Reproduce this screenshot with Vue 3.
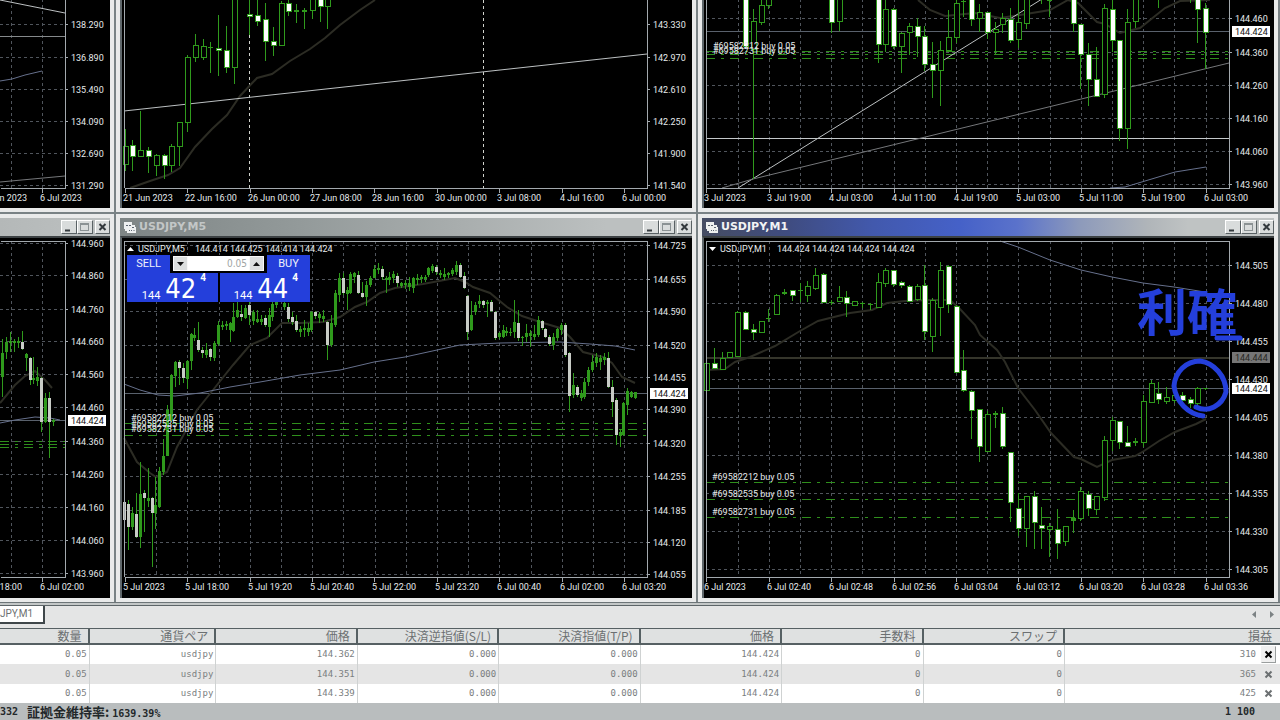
<script setup>
import { ref } from 'vue'

const lot = ref('0.05')

// Candle rows: [slot, high, low, bodyTop, bodyBottom, kind]
// Vertical values are in thirds of a pixel below the chart's base line.
// kind: 0 rising, 1 falling, 2 flat
const step = 7.8
const vlines = (x0, n) => Array.from({ length: n }, (_, i) => Math.round(x0 + 31.2 * (i + 1)))
const ys = (list, y) => list.map((t, i) => ({ t, y: y[i] }))
const dates = (list, x0) => list.map((t, i) => ({ t, x: Math.round(x0 + 62.4 * i) }))

const h1 = [
  [0,388,513,437,492,0],[1,420,513,436,467,1],[2,332,470,450,467,0],[3,441,518,451,469,1],[4,463,527,464,496,0],
  [5,463,538,465,496,1],[6,432,515,438,496,0],[7,365,497,367,439,0],[8,166,396,170,367,0],[9,101,185,134,171,0],
  [10,117,180,139,170,0],[11,125,218,140,144,2],[12,45,227,143,151,1],[13,78,220,149,201,1],[14,-9,252,-9,200,0],
  [16,-9,105,41,48,1],[17,-9,77,44,64,1],[18,10,183,58,124,1],[19,82,167,124,135,1],[20,3,137,9,136,0],
  [21,0,47,8,32,1],[22,12,70,31,35,2],[23,25,88,31,35,2],[24,-9,58,-9,30,0],[25,-9,66,-9,19,1],[26,-9,87,-9,19,0]
]
const m30 = [
  [5,-9,140,-9,138,1],[6,28,538,62,148,0],[7,-9,75,14,66,0],[8,-9,28,-9,15,0],[16,-9,100,-9,65,1],[17,-9,93,-9,62,0],
  [22,-9,188,-9,131,1],[23,-9,155,26,133,0],[24,24,147,26,138,1],[25,95,220,98,138,0],[26,70,165,78,97,0],
  [27,55,170,77,108,1],[28,77,213,109,193,1],[29,127,293,191,211,1],[30,123,317,150,211,0],[31,30,150,112,150,0],
  [32,0,130,8,112,0],[33,-9,52,2,6,2],[34,-9,77,-9,56,1],[35,13,95,37,55,0],[36,36,118,37,95,1],[37,65,165,86,95,0],
  [38,40,100,55,73,0],[39,23,130,57,119,1],[40,-9,145,65,118,0],[41,-9,88,-9,68,0],[43,-9,13,-9,-6,2],[44,-9,50,0,3,2],
  [47,-9,97,-9,70,1],[48,72,268,73,163,1],[49,128,317,162,238,1],[50,140,290,238,288,1],[51,13,293,25,283,0],
  [52,0,155,26,121,1],[53,120,422,121,383,1],[54,27,447,65,385,0],[55,-9,83,-9,62,0],[58,-9,23,-9,-6,2],
  [62,-9,8,-9,-6,2],[63,-9,130,-9,27,1],[64,10,208,23,95,1]
]
const m1 = [
  [0,445,525,445,525,0],[1,400,463,443,460,1],[2,410,463,428,462,0],[3,411,425,411,425,0],[4,288,424,290,422,0],
  [5,287,344,290,343,1],[6,328,375,341,351,1],[7,318,351,319,350,0],[8,283,322,308,312,2],[9,238,299,240,298,0],
  [10,223,240,232,238,2],[11,225,257,226,240,1],[12,205,260,225,229,2],[13,198,262,213,240,0],[14,160,226,180,218,0],
  [15,174,264,176,260,1],[16,256,270,260,265,2],[17,213,260,247,258,0],[18,228,305,247,265,1],[19,257,273,258,270,0],
  [20,262,280,264,268,2],[21,264,285,266,270,2],[22,173,276,200,275,0],[23,160,215,166,204,0],[24,164,215,166,207,1],
  [25,198,218,201,210,1],[26,210,258,214,257,1],[27,208,258,213,251,0],[28,150,375,209,347,1],[29,248,410,256,363,0],
  [30,140,362,165,275,0],[31,150,293,153,268,1],[32,270,474,273,470,1],[33,405,530,464,525,1],[34,525,673,527,585,1],
  [35,583,740,583,692,1],[36,588,708,598,707,0],[37,588,640,595,601,2],[38,576,702,593,692,1],[39,711,920,712,862,1],
  [40,835,963,878,940,1],[41,843,995,844,940,0],[42,828,1003,844,920,1],[43,877,1002,930,939,1],[44,925,1027,934,943,0],
  [45,883,1032,943,983,1],[46,933,992,934,977,0],[47,885,953,910,918,2],[48,817,918,829,910,0],[49,829,903,836,878,1],
  [50,843,899,844,881,0],[51,663,858,674,845,0],[52,605,707,615,675,0],[53,617,703,619,680,1],[54,632,695,680,692,1],
  [55,670,693,679,684,2],[56,540,697,558,681,0],[57,495,561,503,560,0],[58,500,568,535,552,1],[59,515,567,545,558,0],
  [60,538,565,540,556,0],[61,530,561,540,555,1],[62,547,580,552,565,1],[63,517,570,519,565,0],[64,518,524,519,523,2]
]
const m5 = [
  [0,855,972,860,915,1],[1,855,1005,868,937,1],[2,875,945,895,937,0],[3,835,970,897,965,1],[4,740,1000,837,965,0],
  [5,825,950,835,850,1],[6,760,875,850,857,0],[7,847,1057,850,893,1],[8,785,942,870,893,0],[9,757,878,768,875,0],
  [10,673,780,722,770,0],[11,570,724,585,722,0],[12,478,620,480,615,0],[13,437,515,442,482,0],[14,435,510,442,460,1],
  [15,445,505,460,490,1],[16,435,522,437,492,0],[17,355,465,358,437,0],[18,338,378,360,370,0],[19,322,412,375,405,1],
  [20,395,430,405,415,1],[21,385,428,405,420,0],[22,400,437,402,427,1],[23,378,437,385,430,0],[24,317,392,330,388,0],
  [25,318,345,330,335,0],[26,318,345,328,334,0],[27,320,380,324,345,0],[28,265,350,305,347,0],[29,262,310,285,305,0],
  [30,270,318,297,305,1],[31,270,312,280,310,0],[32,240,330,270,300,1],[33,285,330,290,318,0],[34,285,325,312,320,0],
  [35,300,330,313,320,0],[36,300,335,310,330,1],[37,280,365,300,335,0],[38,262,318,268,305,0],[39,250,280,255,270,0],
  [41,250,285,265,275,0],[42,263,320,275,312,1],[43,290,330,305,320,1],[44,300,350,318,345,1],[45,332,365,342,350,0],
  [46,315,365,340,346,0],[47,325,362,340,350,0],[48,288,350,290,345,0],[49,288,312,292,304,1],[50,290,325,298,308,0],
  [51,285,320,304,312,0],[52,318,435,320,390,1],[53,300,395,325,390,0],[54,225,335,235,330,0],[55,175,262,190,240,0],
  [56,175,240,190,235,1],[57,215,285,225,238,0],[58,170,237,178,235,0],[59,170,205,175,185,0],[60,168,238,180,235,1],
  [61,200,250,233,245,1],[62,198,272,210,245,0],[63,183,215,188,210,0],[64,150,190,162,188,0],[65,143,178,158,165,0],
  [66,152,195,162,185,1],[67,183,235,188,195,0],[68,170,210,185,195,0],[69,168,205,178,190,0],[70,175,215,182,205,1],
  [71,200,220,205,212,0],[72,195,222,205,211,0],[73,185,228,203,215,0],[74,185,233,188,218,0],[75,178,210,188,195,0],
  [76,180,205,187,193,0],[77,180,200,187,193,0],[78,155,185,160,180,0],[79,148,175,152,168,0],[80,150,180,155,172,1],
  [81,165,190,174,180,0],[82,160,195,178,185,0],[83,170,190,175,181,0],[84,160,183,165,178,0],[85,138,180,150,172,0],
  [86,145,190,150,185,1],[87,170,222,183,220,1],[88,240,374,242,352,1],[89,258,348,300,345,0],[90,262,300,270,290,0],
  [91,240,280,258,266,0],[92,255,280,258,270,1],[93,255,305,260,268,0],[94,255,290,260,288,1],[95,288,375,290,368,1],
  [96,350,372,355,366,0],[97,330,370,345,365,0],[98,335,362,347,355,0],[99,340,362,350,355,0],[100,255,370,320,350,0],
  [101,285,378,325,370,1],[102,362,392,365,370,0],[103,328,380,355,365,0],[104,345,395,355,362,0],[105,330,375,358,365,0],
  [106,303,365,315,360,0],[107,315,345,318,340,1],[108,338,370,343,365,1],[109,360,392,365,388,1],[110,355,405,365,390,0],
  [111,340,378,343,370,0],[112,323,360,330,345,0],[113,325,425,330,420,1],[114,410,590,415,542,1],[115,475,548,510,540,0],
  [116,510,545,515,540,1],[117,525,557,535,548,0],[118,490,552,500,545,0],[119,455,512,465,500,0],[120,420,470,440,465,0],
  [121,415,455,425,445,0],[122,420,465,430,440,0],[123,415,450,425,435,0],[124,410,520,430,515,1],[125,495,605,515,560,1],
  [126,550,690,555,660,1],[127,645,697,650,663,0],[128,560,664,565,660,0],[129,520,600,527,570,0],[130,528,550,532,545,0],
  [131,530,552,532,548,0]
]
const m15 = [
  [-1,440,490,450,482,0],[0,372,545,415,485,0],[1,365,432,380,410,0],[2,350,412,378,385,0],[3,372,412,379,385,0],
  [4,365,400,378,385,0],[5,348,405,380,402,1],[6,415,468,417,428,0],[7,427,510,428,495,1],[8,427,507,489,495,0],
  [9,457,512,485,497,0],[10,485,650,490,620,1],[11,535,625,548,620,0],[12,530,728,548,620,1],[13,612,632,616,622,0]
]

const wave = ['144.960','144.860','144.760','144.660','144.560','144.460','144.360','144.260','144.160','144.060','143.960']

const windows = [
  {
    id: 'daily', cls: 'edge', box: [0, 0, 110, 208], plot: [0, -1, 65, 188],
    vx: [11, 42], prices: ys(['138.290','136.890','135.490','134.090','132.690','131.290'], [24, 57, 89, 121, 153, 185]),
    dates: [{ t: 'n 2023', x: 27, end: true, tick: -20 }, { t: '6 Jul 2023', x: 42 }],
    levels: [{ y: 36, c: 'rule' }],
    curves: [
      { c: 'bright', p: '0,0 65,13' }, { c: 'ma-slow', p: '0,81 12,79 25,75 42,71' }, { c: 'mid', p: '0,182 65,176' }
    ]
  },
  {
    id: 'h4', cls: 'inner', box: [122, 0, 570, 208], plot: [124, -1, 647, 188], vx: [],
    prices: ys(['143.330','142.970','142.610','142.250','141.900','141.540'], [24, 57, 89, 121, 153, 185]), noGrid: true,
    dates: dates(['21 Jun 2023','22 Jun 16:00','26 Jun 00:00','27 Jun 08:00','28 Jun 16:00','30 Jun 00:00','3 Jul 08:00','4 Jul 16:00','6 Jul 00:00'], 124.7),
    marks: [{ x: 249, y: 35 }, { x: 483, y: 0 }],
    curves: [
      { c: 'ma-fast', p: '130,188 150,181 168,175 180,168 195,147 212,129 227,115 240,96 257,78 272,74 290,61 310,49 325,38 340,25 360,10 375,0' },
      { c: 'bright', p: '124,111 647,54' }
    ],
    candles: h1, x0: 125, step, base: 0, w: 5
  },
  {
    id: 'm30', cls: 'inner', box: [704, 0, 570, 208], plot: [706, -1, 1229, 188], vx: vlines(706.4, 16),
    prices: ys(['144.460','144.360','144.260','144.160','144.060','143.960'], [18, 52, 85, 118, 151, 184]),
    dates: dates(['3 Jul 2023','3 Jul 19:00','4 Jul 03:00','4 Jul 11:00','4 Jul 19:00','5 Jul 03:00','5 Jul 11:00','5 Jul 19:00','6 Jul 03:00'], 706.4),
    levels: [{ y: 31, c: 'bid' }, { y: 138, c: 'solid' }], orders: [51, 54, 58],
    notes: [{ t: '#69582212 buy 0.05', x: 713, y: 49 }, { t: '#69582731 buy 0.05', x: 713, y: 54 }],
    tags: [{ t: '144.424', y: 31, c: 'now' }],
    curves: [
      { c: 'ma-fast', p: '918,0 930,10 945,16 975,13 1000,18 1020,15 1050,10 1068,0 1078,3 1097,22 1105,24 1120,33 1140,28 1165,8 1180,1 1210,0' },
      { c: 'bright', p: '738,188 1042,-1' }, { c: 'mid', p: '722,188 753,179 1229,63' },
      { c: 'ma-slow', p: '1110,188 1125,187 1145,181 1175,172 1206,167' }
    ],
    candles: m30, x0: 706.4, step, base: 0, w: 5
  },
  {
    id: 'm15', cls: 'edge', bar: 'idle', title: '', box: [0, 238, 110, 360], plot: [0, 241, 65, 577],
    vx: [11, 42], prices: ys(wave, [243, 275, 309, 341, 374, 407, 441, 474, 507, 540, 573]),
    dates: [{ t: '18:00', x: 22, end: true, tick: -20 }, { t: '6 Jul 02:00', x: 42 }],
    levels: [{ y: 420, c: 'bid' }], orders: [441, 444, 447], tags: [{ t: '144.424', y: 420, c: 'now' }],
    curves: [
      { c: 'ma-fast', p: '0,403 15,385 25,376 35,371 45,380 52,388' },
      { c: 'ma-slow', p: '0,423 15,420 35,417 50,418 60,420' }
    ],
    candles: m15, x0: 2.7, step: 3.9, base: 215, w: 3
  },
  {
    id: 'm5', cls: 'inner', bar: 'idle', title: 'USDJPY,M5', box: [122, 238, 570, 360], plot: [124, 241, 647, 577],
    vx: vlines(124.9, 16),
    prices: ys(['144.725','144.655','144.590','144.520','144.455','144.390','144.320','144.255','144.185','144.120','144.055'], [245, 279, 311, 345, 377, 409, 443, 476, 510, 542, 574]),
    dates: dates(['5 Jul 2023','5 Jul 18:00','5 Jul 19:20','5 Jul 20:40','5 Jul 22:00','5 Jul 23:20','6 Jul 00:40','6 Jul 02:00','6 Jul 03:20'], 124.7),
    levels: [{ y: 393, c: 'bid' }], orders: [423, 429, 435], tags: [{ t: '144.424', y: 393, c: 'now' }],
    notes: [{ t: '#69582212 buy 0.05', x: 131, y: 421 }, { t: '#69582535 buy 0.05', x: 131, y: 427 }, { t: '#69582731 buy 0.05', x: 131, y: 432 }],
    head: { t: 'USDJPY,M5', v: '144.414 144.425 144.414 144.424', arrow: '127,251 134,251 130.5,247' },
    trade: true,
    curves: [
      { c: 'ma-fast', p: '124,438 137,462 150,473 156,477 167,472 177,447 197,410 213,390 233,365 250,345 267,338 282,323 300,323 323,322 340,317 355,307 367,302 380,293 395,288 423,284 455,278 465,282 473,287 490,293 507,307 522,316 540,322 560,328 570,337 583,352 603,357 612,363 622,377 635,383' },
      { c: 'ma-slow', p: '124,384 140,390 158,395 175,396 200,393 230,387 260,382 300,375 340,370 374,362 405,357 437,350 460,345 500,343 560,342 590,344 615,346 635,350' }
    ],
    candles: m5, x0: 124.7, step: 3.9, base: 215, w: 3
  },
  {
    id: 'm1', cls: 'inner', bar: 'live', title: 'USDJPY,M1', box: [704, 238, 570, 360], plot: [706, 241, 1229, 577],
    vx: vlines(706.4, 16),
    prices: ys(['144.505','144.480','144.455','144.430','144.405','144.380','144.355','144.330','144.305'], [265, 303, 341, 379, 417, 455, 493, 531, 569]),
    dates: dates(['6 Jul 2023','6 Jul 02:40','6 Jul 02:48','6 Jul 02:56','6 Jul 03:04','6 Jul 03:12','6 Jul 03:20','6 Jul 03:28','6 Jul 03:36'], 706.4),
    levels: [{ y: 357, c: 'ask' }, { y: 388, c: 'bid' }], orders: [482, 499, 517],
    tags: [{ t: '144.444', y: 357, c: 'old' }, { t: '144.424', y: 388, c: 'now' }],
    notes: [{ t: '#69582212 buy 0.05', x: 712, y: 480 }, { t: '#69582535 buy 0.05', x: 712, y: 497 }, { t: '#69582731 buy 0.05', x: 712, y: 515 }],
    head: { t: 'USDJPY,M1', v: '144.424 144.424 144.424 144.424', arrow: '709,247 716,247 712.5,251' },
    sketch: true,
    curves: [
      { c: 'ma-fast', p: '706,370 725,369 735,362 750,357 775,346 800,331 818,321 850,313 872,310 887,303 905,301 930,300 950,300 960,309 975,325 980,335 997,350 1005,362 1018,388 1035,410 1051,433 1074,457 1081,459 1097,467 1112,460 1135,456 1144,451 1159,441 1175,432 1196,424 1206,419' },
      { c: 'ma-slow', p: '1000,241 1018,247 1050,260 1081,270 1112,277 1143,283 1174,287 1205,292' }
    ],
    candles: m1, x0: 706.4, step, base: 215, w: 5
  }
]

function wicks(w) {
  return (w.candles || []).map(c => {
    const x = Math.round(w.x0 + c[0] * w.step - 0.5) + 0.5
    return `M${x} ${w.base + c[1] / 3}V${w.base + c[2] / 3}`
  }).join('')
}
function bodies(w) {
  return (w.candles || []).map(c => {
    const cx = Math.round(w.x0 + c[0] * w.step - 0.5) + 0.5
    const y = Math.round(w.base + c[3] / 3)
    const h = Math.max(1, Math.round(w.base + c[4] / 3) - y)
    const flat = c[5] === 2
    const name = w.w === 3 ? (c[5] === 1 ? 'dense-down' : 'dense-up') : flat ? 'flat' : c[5] === 1 ? 'down' : 'up'
    return { x: cx - w.w / 2, y: w.w === 3 || flat ? y : y + 0.5, w: w.w, h, name }
  })
}

const columns = ['数量', '通貨ペア', '価格', '決済逆指値(S/L)', '決済指値(T/P)', '価格', '手数料', 'スワップ', '損益']
const positions = [
  ['0.05', 'usdjpy', '144.362', '0.000', '0.000', '144.424', '0', '0', '310'],
  ['0.05', 'usdjpy', '144.351', '0.000', '0.000', '144.424', '0', '0', '365'],
  ['0.05', 'usdjpy', '144.339', '0.000', '0.000', '144.424', '0', '0', '425']
]
</script>

<template>
  <main class="terminal">
    <section class="desk">
      <article v-for="w in windows" :key="w.id" class="win" :class="w.cls">
        <header v-if="w.bar" class="bar" :class="w.bar">
          <template v-if="w.title">
            <svg class="logo" viewBox="0 0 14 13" aria-hidden="true">
              <path d="M1 1h8v3h3v2h1v6H4v-2H2V8H1z" fill="#eef0f0" />
              <path d="M3 4.500h2M6 4.500h2M6 9.500h1M8 9.500h1M11 9v1M9 6.500h2" stroke="#5b6470" fill="none" />
            </svg>
            <h2>{{ w.title }}</h2>
          </template>
          <div class="tools">
            <button type="button" aria-label="Minimize"><svg viewBox="0 0 11 10"><path d="M2 8.500h5" /></svg></button>
            <button type="button" aria-label="Maximize"><svg viewBox="0 0 11 10"><path class="pale" d="M1.500 1v8M9.500 1v8M1 8.500h9M1 1.500h9M1 2.500h9" /></svg></button>
            <button type="button" aria-label="Close" class="shut"><svg viewBox="0 0 11 10"><path class="cross" d="M2.500 2l6 6M8.500 2l-6 6" /></svg></button>
          </div>
        </header>
        <div class="chart">
          <svg class="plot" :viewBox="w.box.join(' ')">
            <g class="grid">
              <path v-for="x in w.vx" :key="x" :d="`M${x + 0.5} ${w.plot[1]}V${w.plot[3]}`" />
              <template v-if="!w.noGrid">
                <path v-for="p in w.prices" :key="p.y" :d="`M${w.plot[0]} ${p.y + 0.5}H${w.plot[2]}`" />
              </template>
            </g>
            <path v-for="m in w.marks" :key="m.x" class="period" :d="`M${m.x + 0.5} ${m.y}V${w.plot[3]}`" />
            <path v-for="l in w.levels" :key="l.y" :class="l.c" :d="`M${w.plot[0]} ${l.y + 0.5}H${w.plot[2]}`" />
            <path v-for="y in w.orders" :key="y" class="order" :d="`M${w.plot[0]} ${y + 0.5}H${w.plot[2]}`" />
            <polyline v-for="c in w.curves" :key="c.p" :class="c.c" :points="c.p" />
            <path class="wick" :d="wicks(w)" />
            <rect v-for="(b, i) in bodies(w)" :key="i" :class="b.name" :x="b.x" :y="b.y" :width="b.w" :height="b.h" />
            <path class="axis" :d="`M${w.plot[0] + 0.5} ${w.plot[1] + 0.5}H${w.plot[2] + 0.5}V${w.plot[3] + 0.5}H${w.plot[0] + 0.5}`" />
            <path v-if="w.cls === 'inner'" class="axis" :d="`M${w.plot[0] + 0.5} ${w.plot[1]}V${w.plot[3]}`" />
            <g class="axis">
              <path v-for="p in w.prices" :key="p.y" :d="`M${w.plot[2]} ${p.y + 0.5}h3`" />
              <path v-for="d in w.dates" :key="d.t" :d="`M${(d.tick || d.x) + 0.5} ${w.plot[3]}v5`" />
            </g>
            <text v-for="p in w.prices" :key="p.t" :x="w.plot[2] + 6" :y="p.y + 4">{{ p.t }}</text>
            <text v-for="d in w.dates" :key="d.t" :x="d.end ? d.x : d.x - 2" :y="w.plot[3] + 13" :text-anchor="d.end ? 'end' : 'start'">{{ d.t }}</text>
            <text v-for="n in w.notes" :key="n.t" :x="n.x" :y="n.y">{{ n.t }}</text>
            <g v-for="t in w.tags" :key="t.t" :class="t.c">
              <rect :x="w.plot[2] + 3" :y="t.y - 5" width="38" height="11" />
              <text :x="w.plot[2] + 6" :y="t.y + 4">{{ t.t }}</text>
            </g>
            <template v-if="w.head">
              <polygon class="arrow" :points="w.head.arrow" />
              <text :x="w.plot[0] + 14" :y="252">{{ w.head.t }}</text>
              <text :x="w.plot[0] + 71" :y="252">{{ w.head.v }}</text>
            </template>
            <g v-if="w.sketch" class="pen">
              <text class="memo" x="1137" y="331">利確</text>
              <path d="M1217 338H1240" />
              <path d="M1196 407C1208 413 1222 406 1226 392C1226 376 1214 363 1200 361C1186 361 1175 372 1174 386C1176 402 1188 414 1203 416" />
            </g>
          </svg>
          <form v-if="w.trade" class="trade" @submit.prevent>
            <button type="button" class="side sell">SELL</button>
            <div class="lot">
              <button type="button" aria-label="Decrease"><svg viewBox="0 0 7 4"><path d="M0 0h7L3.500 4z" /></svg></button>
              <input v-model="lot" type="text" aria-label="Volume" />
              <button type="button" aria-label="Increase"><svg viewBox="0 0 7 4"><path d="M0 4h7L3.500 0z" /></svg></button>
            </div>
            <button type="button" class="side buy">BUY</button>
            <button type="button" class="quote bid-box"><small>144</small><b>42</b><sup>4</sup></button>
            <button type="button" class="quote ask-box"><small>144</small><b>44</b><sup>4</sup></button>
          </form>
        </div>
      </article>
    </section>

    <nav class="tabs">
      <a href="#m1">JPY,M1</a>
      <div class="scroll">
        <button type="button" aria-label="Scroll left"><svg viewBox="0 0 4 7"><path d="M4 0v7L0 3.500z" /></svg></button>
        <button type="button" aria-label="Scroll right"><svg viewBox="0 0 4 7"><path d="M0 0v7l4-3.500z" /></svg></button>
      </div>
    </nav>

    <table class="deals">
      <colgroup>
        <col class="c1" /><col class="c2" /><col class="c3" /><col class="c3" /><col class="c3" /><col class="c3" /><col class="c3" /><col class="c3" /><col />
      </colgroup>
      <thead>
        <tr><th v-for="(c, i) in columns" :key="i" scope="col">{{ c }}</th></tr>
      </thead>
      <tbody>
        <tr v-for="(p, r) in positions" :key="r">
          <td v-for="(v, i) in p" :key="i">
            <span>{{ v }}</span>
            <button v-if="i === 8" type="button" aria-label="Close position" :class="{ hot: r === 0 }">
              <svg viewBox="0 0 9 9"><path d="M1.500 1.500l6 6M7.500 1.500l-6 6" /></svg>
            </button>
          </td>
        </tr>
      </tbody>
    </table>

    <footer class="status">
      <p><span>332</span><span class="ratio">証拠金維持率: <span>1639.39%</span></span></p>
      <output>1 100</output>
    </footer>
  </main>
</template>

<style>
body { background: #c3c7c7; overflow-x: hidden; }
</style>

<style scoped>
* { box-sizing: border-box; margin: 0; }
button { padding: 0; border: 0; font: inherit; }
.terminal {
  display: flex;
  flex-direction: column;
  min-height: 100vh;
  overflow: hidden;
  font-family: "Roboto", "Noto Sans CJK JP", sans-serif;
  background: #c3c7c7;
}
.desk {
  display: grid;
  grid-template-columns: 114fr 580fr 580fr;
  gap: 2px;
  padding-right: 2px;
  background: #798285;
  border-bottom: 1px solid #6d7578;
}
.win { min-width: 0; border: 4px solid #e9eaea; background: #000; }
.win:nth-child(-n + 3) { border-top: 0; }
.edge { border-left: 0; }
.chart { position: relative; overflow: hidden; background: #000; }
.inner .chart { border-left: 2px solid #5f676b; }
.bar + .chart { border-top: 2px solid #3c4143; }
.plot { display: block; width: 100%; height: auto; }

.bar { display: flex; align-items: center; height: 18px; padding-left: 3px; }
.idle { background: linear-gradient(90deg, #7e8585, #929999 30%, #a9aeae 60%, #bcc0c0 85%); }
.edge .idle { background: linear-gradient(90deg, #b4b8b8, #bdc1c1); }
.live { background: linear-gradient(90deg, #464d63, #3f4c80 15%, #4259ad 30%, #4561c8 45%, #5a72cb 55%, #8d9abb 66%, #b0b5b9 78%, #bfc3c3 85%); }
.logo { width: 14px; height: 13px; margin-right: 2px; }
.bar h2 { font: bold 11px/18px "DejaVu Sans", sans-serif; color: #c3c7c7; }
.live h2 { color: #f2f4f4; }
.tools { display: flex; margin-left: auto; }
.tools button { width: 16px; height: 14px; background: #d9dcdc; border: 1px solid; border-color: #fff #596164 #596164 #fff; }
.tools .shut { width: 15px; margin-left: 2px; }
.tools svg { display: block; width: 11px; height: 10px; margin: 1px; }
.tools path { fill: none; stroke: #33393d; stroke-width: 2; }
.tools .pale { stroke: #8b9294; stroke-width: 1; }

.plot text { font: 9px "Roboto", "Noto Sans", sans-serif; fill: #e6eaec; }
.plot path, .plot rect { shape-rendering: crispEdges; }
.plot path, .plot polyline { fill: none; }
.grid { stroke: #50555c; stroke-dasharray: 3 3; }
.axis { stroke: #a3a9ae; }
.period { stroke: #d0d2cc; stroke-width: 1; stroke-dasharray: 3 3; }
.bid { stroke: #59616c; }
.ask { stroke: #35352b; stroke-width: 2; }
.rule { stroke: #85898b; }
.solid { stroke: #c4c8ca; }
.order { stroke: #2f8f1c; stroke-dasharray: 9 6 3 6; }
.bright { stroke: #bcc0c2; }
.mid { stroke: #75777a; }
.ma-fast { stroke: #2c2c24; stroke-width: 2; }
.ma-slow { stroke: #66708c; }
.wick { stroke: #2f9a1c; stroke-width: 1; }
.up { fill: #000; stroke: #2f9a1c; }
.down { fill: #fff; stroke: #2f9a1c; }
.flat, .dense-up { fill: #2f9a1c; }
.dense-down { fill: #c8ccc6; }
.arrow { fill: #fff; }
.now rect { fill: #fff; }
.plot .now text { fill: #111; }
.old rect { fill: #767676; }
.plot .old text { fill: #26261f; }
.pen path { shape-rendering: auto; stroke: #243fdb; stroke-width: 5; stroke-linecap: round; }
.plot .memo { font: 700 50px "Noto Sans CJK JP", sans-serif; fill: #243fdb; }

.trade {
  position: absolute;
  top: 17px;
  left: 5px;
  display: grid;
  grid-template-columns: 43px 48px 2px 47px 43px;
  grid-template-rows: 18px 29px;
  background: #000;
}
.trade .side { grid-row: 1; background: #243fdb; color: #f0f2fa; font: 11px/18px "Roboto", sans-serif; }
.sell { grid-column: 1; }
.buy { grid-column: 5; }
.lot { grid-row: 1; grid-column: 2 / 5; display: flex; height: 15px; margin: 1px 3px 0; background: #fff; }
.lot button { display: flex; align-items: center; justify-content: center; flex: none; width: 15px; background: #dcdede; border: 1px solid #f8f8f8; }
.lot svg { width: 7px; height: 4px; fill: #111; }
.lot input { flex: 1; min-width: 0; padding: 0 2px; border: 0; background: #fff; color: #a0a4a4; text-align: right; font: 10px "DejaVu Sans Condensed", sans-serif; }
.quote { grid-row: 2; display: flex; align-items: flex-end; justify-content: flex-end; padding-right: 12px; background: #243fdb; color: #fff; line-height: 1; }
.bid-box { grid-column: 1 / 3; }
.ask-box { grid-column: 4 / 6; }
.quote small { font: 11px/13px "Roboto", sans-serif; margin-right: 5px; }
.quote b { font: 27px/27px "DejaVu Sans Condensed", "DejaVu Sans", sans-serif; }
.quote sup { align-self: flex-start; font: bold 10px/10px "Roboto", sans-serif; margin-left: 4px; }

.tabs { display: flex; justify-content: space-between; align-items: flex-start; height: 23px; margin-top: 2px; background: #e4e5e5; border-top: 1px solid #5d6568; }
.tabs a { width: 45px; height: 18px; background: #fff; border-right: 2px solid #3f474a; border-bottom: 2px solid #3f474a; color: #6c7072; font-size: 10px; line-height: 15px; text-decoration: none; }
.scroll { display: flex; gap: 14px; padding: 5px 6px 0 0; }
.scroll button { display: block; background: none; }
.scroll svg { display: block; width: 4px; height: 7px; fill: #7c8284; }

.deals { width: 100%; table-layout: fixed; border-collapse: separate; border-spacing: 0; color: #7a7e7f; }
.c1 { width: 7%; }
.c2 { width: 9.9%; }
.c3 { width: 11.05%; }
th { height: 17px; padding: 0 6px 0 0; background: #dfe1e1; border: solid #566063; border-width: 1px 2px 2px 0; text-align: right; font: 400 12px/14px "Noto Sans CJK JP", sans-serif; color: #6c7072; white-space: nowrap; }
th:last-child { border-right-width: 0; padding-right: 8px; }
td { height: 19px; padding: 0 2px 0 0; background: #fff; border-right: 1px solid #cfd2d2; text-align: right; font: 9px/19px "DejaVu Sans Mono", monospace; }
td:last-child { display: flex; justify-content: flex-end; align-items: center; gap: 5px; padding-right: 4px; border-right: 0; }
tbody tr:nth-child(2) td { background: #e5e5e5; height: 20px; }
td button { width: 15px; height: 17px; background: none; border: 1px solid transparent; color: #6c7072; }
td button.hot { color: #000; background: #f0f0f0; border-color: transparent #9a9e9e #9a9e9e transparent; }
td svg { display: block; width: 9px; height: 9px; margin: 0 auto; fill: none; stroke: currentColor; stroke-width: 2; }

.status { flex: 1; display: flex; justify-content: space-between; padding-right: 25px; background: #b9bdbe; color: #23282a; font: 700 10px/17px "DejaVu Sans Mono", "Noto Sans CJK JP", monospace; }
.status p { display: flex; gap: 9px; }
.ratio { font-family: "Noto Sans CJK JP", sans-serif; font-size: 13px; }
.ratio span { font: 700 10px/17px "DejaVu Sans Mono", monospace; }
</style>
